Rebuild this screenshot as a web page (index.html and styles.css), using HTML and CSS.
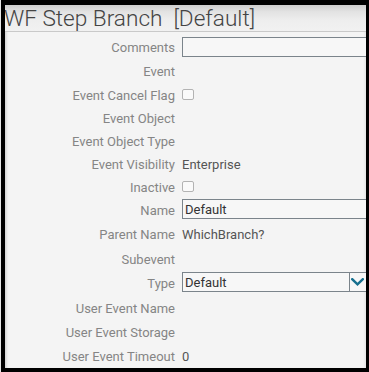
FILE: index.html
```html
<!DOCTYPE html>
<html lang="en">
<head>
<meta charset="utf-8">
<title>WF Step Branch</title>
<link rel="stylesheet" href="styles.css">
</head>
<body>
<div class="frame">
  <div class="title">WF Step Branch&nbsp; [Default]</div>
  <div class="form">
    <div class="label">Comments</div>
    <div class="value"><div class="input"></div></div>

    <div class="label">Event</div>
    <div class="value"></div>

    <div class="label">Event Cancel Flag</div>
    <div class="value"><span class="checkbox"></span></div>

    <div class="label">Event Object</div>
    <div class="value"></div>

    <div class="label">Event Object Type</div>
    <div class="value"></div>

    <div class="label">Event Visibility</div>
    <div class="value text">Enterprise</div>

    <div class="label">Inactive</div>
    <div class="value"><span class="checkbox"></span></div>

    <div class="label">Name</div>
    <div class="value"><div class="input">Default</div></div>

    <div class="label">Parent Name</div>
    <div class="value text">WhichBranch?</div>

    <div class="label">Subevent</div>
    <div class="value"></div>

    <div class="label">Type</div>
    <div class="value">
      <div class="select">
        <span class="select-text">Default</span>
        <span class="select-btn">
          <svg width="13" height="8" viewBox="0 0 13 8"><path d="M1.2 1.2 L6.5 6.3 L11.8 1.2" fill="none" stroke="#17708f" stroke-width="2.4" stroke-linecap="square"/></svg>
        </span>
      </div>
    </div>

    <div class="label">User Event Name</div>
    <div class="value"></div>

    <div class="label">User Event Storage</div>
    <div class="value"></div>

    <div class="label">User Event Timeout</div>
    <div class="value text">0</div>
  </div>
</div>
</body>
</html>
```

FILE: styles.css
```css
html, body {
  margin: 0;
  padding: 0;
  background: #e6e6e6;
}

.frame {
  box-sizing: border-box;
  width: 368px;
  height: 372px;
  margin-left: 1px;
  border-style: solid;
  border-color: #000;
  border-width: 5px 3px 4px 4px;
  background: #f4f4f4;
  overflow: hidden;
  font-family: Roboto, "Liberation Sans", sans-serif;
  box-shadow: inset 3px 0 3px -2px rgba(0, 0, 0, 0.18), inset -3px 0 3px -2px rgba(0, 0, 0, 0.08);
}

.title {
  height: 26px;
  line-height: 27px;
  font-family: "Roboto Light", Roboto, "Liberation Sans", sans-serif;
  font-size: 22.6px;
  font-weight: 300;
  color: #444;
  white-space: nowrap;
  text-indent: -1px;
  background: linear-gradient(#cdcdcd, #e2e2e2 25%, #eeeeee 60%, #f1f1f1);
  border-bottom: 1px solid #c9c9c9;
}

.form {
  display: grid;
  grid-template-columns: 170px 1fr;
  grid-template-rows: 23.6px 24px 23.2px 23.2px 22.6px 23.2px 22.8px 24.4px 24.6px 24.2px 25px 23.8px 24.4px 20px;
  column-gap: 7px;
  padding-top: 4.7px;
  align-items: start;
}

.label {
  text-align: right;
  font-size: 13px;
  line-height: 20px;
  padding-top: 1.6px;
  color: #858585;
  white-space: nowrap;
}

.value {
  display: flex;
  align-items: flex-start;
  height: 20px;
  min-width: 0;
}

.value.text {
  font-size: 13px;
  line-height: 20px;
  padding-top: 1.6px;
  color: #555;
}

.input {
  box-sizing: border-box;
  flex: none;
  width: 196px;
  height: 20px;
  border: 1px solid #7b848b;
  background: #f7f7f7;
  font-size: 13px;
  color: #333;
  line-height: 19px;
  padding-left: 2px;
}

.checkbox {
  box-sizing: border-box;
  display: block;
  width: 12px;
  height: 11px;
  margin-top: 5px;
  border: 1px solid #b3b3b3;
  border-radius: 2px;
  background: #fafafa;
}

.select {
  box-sizing: border-box;
  flex: none;
  width: 187px;
  height: 20px;
  border: 1px solid #7b848b;
  background: #f7f7f7;
  display: flex;
  align-items: stretch;
}

.select-text {
  flex: 1;
  font-size: 13px;
  color: #333;
  line-height: 19px;
  padding-left: 2px;
}

.select-btn {
  flex: none;
  width: 17px;
  border-left: 1px solid #7b848b;
  display: flex;
  align-items: center;
  padding-left: 1px;
}
```
